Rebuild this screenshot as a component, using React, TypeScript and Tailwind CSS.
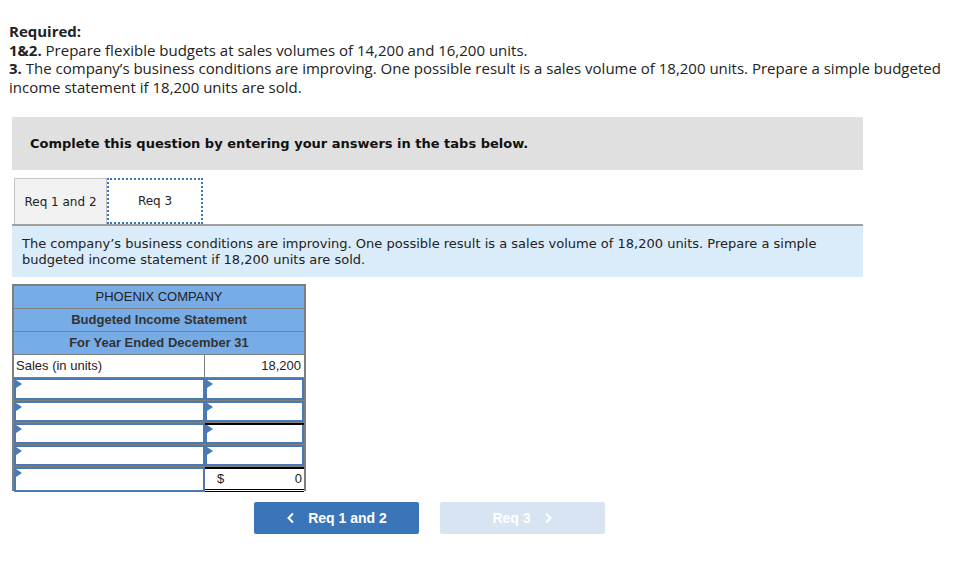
import React from 'react';

const InputCell = ({ extra = '' }: { extra?: string }) => (
  <div className={`relative h-full border-2 border-[#4a7ab5] bg-white ${extra}`}>
    <span className="absolute left-0 top-0 h-0 w-0 border-y-[4px] border-l-[6px] border-y-transparent border-l-[#4a7ab5]" />
  </div>
);

export default function App() {
  const rows = [0, 1, 2, 3];

  return (
    <div className="min-h-screen bg-white text-[#222]">
      <div className="px-[9px] pt-[22px] font-['Open_Sans',sans-serif] text-[15px] leading-[18.5px] text-[#222]">
        <p className="font-bold">Required:</p>
        <p>
          <span className="font-bold">1&amp;2.</span> Prepare flexible budgets at sales volumes of 14,200 and 16,200 units.
        </p>
        <p>
          <span className="font-bold">3.</span> The company’s business conditions are improving. One possible result is a sales volume of 18,200 units. Prepare a simple budgeted income statement if 18,200 units are sold.
        </p>
      </div>

      <div className="ml-[12px] mt-[21px] w-[851px] font-['DejaVu_Sans',Verdana,sans-serif]">
        <div className="flex h-[53px] items-center bg-[#e0e0e0] px-[18px] text-[13px] font-bold text-[#111]">
          Complete this question by entering your answers in the tabs below.
        </div>

        <div className="mt-[8px] flex h-[48px] items-stretch border-b-2 border-[#a0a0a0] pl-[2px] text-[12px] text-[#222]">
          <div className="flex w-[93px] items-center justify-center border border-b-0 border-[#c4c4c4] bg-[#f2f2f2]">
            Req 1 and 2
          </div>
          <div className="flex w-[96px] items-center justify-center border-2 border-dotted border-[#3a75c0] bg-white">
            Req 3
          </div>
        </div>

        <div className="bg-[#daecf9] px-[10px] pb-[9px] pt-[10px] text-[13px] leading-[16px] text-[#222]">
          The company’s business conditions are improving. One possible result is a sales volume of 18,200 units. Prepare a simple budgeted income statement if 18,200 units are sold.
        </div>

        <div className="mt-[7px] w-[294px] border-2 border-[#7f7f7f] font-['Liberation_Sans',Arial,sans-serif] text-[13px] text-[#222]">
          <div className="flex h-[23px] items-center justify-center border-b border-[#7f7f7f] bg-[#78ace6]">
            PHOENIX COMPANY
          </div>
          <div className="flex h-[23px] items-center justify-center border-b border-[#7f7f7f] bg-[#78ace6] font-bold text-[#333]">
            Budgeted Income Statement
          </div>
          <div className="flex h-[23px] items-center justify-center border-b border-[#7f7f7f] bg-[#78ace6] font-bold text-[#333]">
            For Year Ended December 31
          </div>
          <div className="grid h-[23px] grid-cols-[191px_1fr] border-b border-[#7f7f7f]">
            <div className="flex items-center border-r border-[#7f7f7f] pl-[2px]">Sales (in units)</div>
            <div className="flex items-center justify-end pr-[3px]">18,200</div>
          </div>
          {rows.map((r) => (
            <div
              key={r}
              className={`grid grid-cols-[191px_1fr] border-b border-[#7f7f7f] ${r === 0 ? 'h-[23px]' : 'h-[22px]'}`}
            >
              <InputCell />
              <div className={`h-full ${r === 2 ? 'border-t-2 border-black' : ''}`}>
                <InputCell extra={r === 2 ? 'border-t-0' : ''} />
              </div>
            </div>
          ))}
          <div className="grid h-[22px] grid-cols-[191px_1fr]">
            <InputCell />
            <div className="flex items-center justify-between border-y-2 border-b-[3px] border-double border-black bg-white px-[12px] pr-[2px]">
              <span>$</span>
              <span>0</span>
            </div>
          </div>
        </div>

        <div className="mt-[11px] flex gap-[21px] pl-[242px] font-['Liberation_Sans',Arial,sans-serif] text-[14px] font-bold text-white">
          <button className="flex h-[32px] w-[165px] items-center justify-center gap-[12px] rounded-[2px] bg-[#3a75b9]">
            <svg width="10" height="12" viewBox="0 0 10 12" fill="none">
              <path d="M7 1.5 2.5 6 7 10.5" stroke="white" strokeWidth="2" />
            </svg>
            Req 1 and 2
          </button>
          <button className="flex h-[32px] w-[165px] items-center justify-center gap-[12px] rounded-[2px] bg-[#d8e4f1]">
            Req 3
            <svg width="10" height="12" viewBox="0 0 10 12" fill="none">
              <path d="M3 1.5 7.5 6 3 10.5" stroke="white" strokeWidth="2" />
            </svg>
          </button>
        </div>
      </div>
    </div>
  );
}
